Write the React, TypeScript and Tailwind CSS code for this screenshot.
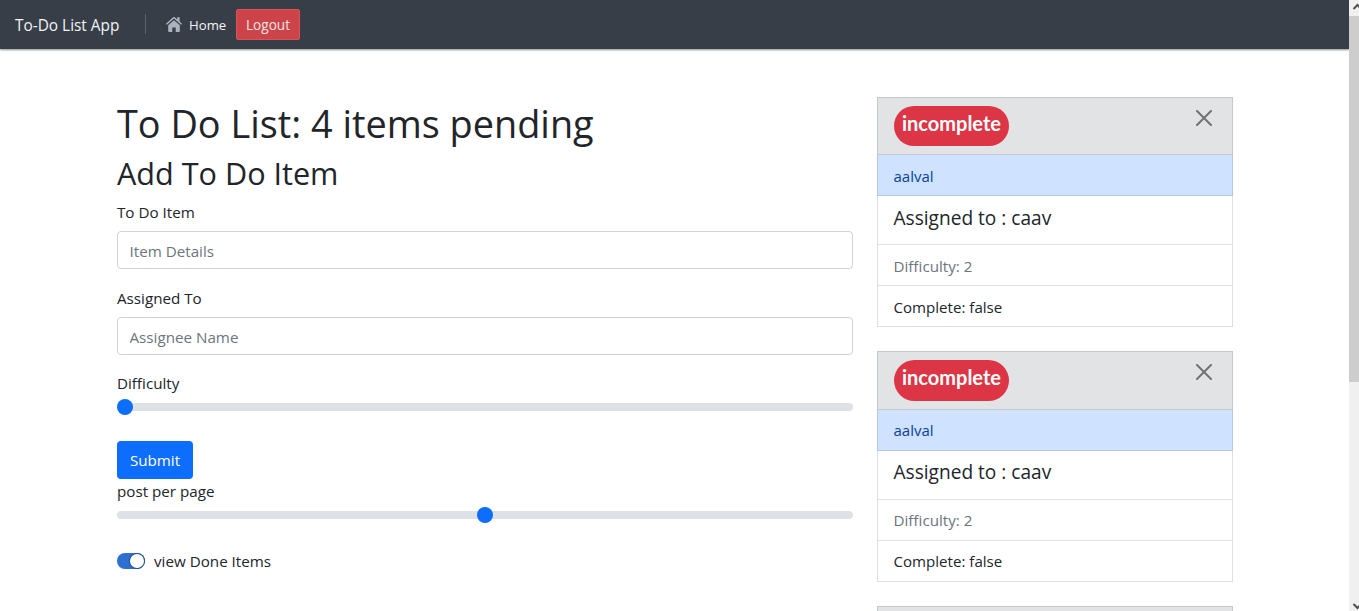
import type { ReactNode } from "react";

function Navbar() {
  return (
    <nav className="flex h-[49px] shrink-0 items-center bg-[#383e48] text-white shadow-[0_1px_2px_rgba(0,0,0,0.45)]">
      <span className="ml-[15px] w-[130px] pt-[2px] text-[15.4px] leading-6 text-[#f1f3f5]">To-Do List App</span>
      <span className="-mt-[2px] h-5 w-px bg-[#5e646d]" />
      <svg className="-mt-[1px] ml-5 h-4 w-4 fill-[#abb3bf]" viewBox="0 0 16 16">
        <path d="M8 4.2 2.2 9.3V15.2c0 .4.3.8.8.8h3.3v-4.6h3.4V16H13c.5 0 .8-.4.8-.8V9.3L8 4.2Z" />
        <path d="M15.7 7.5 13.6 5.6V1.2h-2.3v2.4L8.9 1.3a1.4 1.4 0 0 0-1.8 0L.3 7.5c-.3.3-.3.6-.1.8l.3.3c.2.2.5.2.7 0L8 2.5l6.8 6.1c.2.2.5.2.7 0l.3-.3c.2-.2.2-.5-.1-.8Z" />
      </svg>
      <a className="ml-[7px] w-[47px] pt-[1px] text-[13.2px] leading-5 text-[#f1f3f5]">Home</a>
      <button className="h-[31px] w-16 rounded-[2px] border border-[#d5555a] bg-[#cc4349] pt-[1px] text-[13.6px] leading-5 text-[#f1e3e4]">
        Logout
      </button>
    </nav>
  );
}

function TextField({ label, placeholder }: { label: string; placeholder: string }) {
  return (
    <label className="mb-[17px] block">
      <span className="mb-[7px] block pt-px leading-[23px]">{label}</span>
      <input
        className="block h-[38px] w-full rounded-[4px] border border-[#ced4da] bg-white px-[11.5px] pt-[2px] placeholder:text-[#6c757d]"
        placeholder={placeholder}
      />
    </label>
  );
}

function Range({ start = false }: { start?: boolean }) {
  return (
    <div className="flex h-6 items-center">
      <div className={`flex h-2 w-full items-center rounded-full bg-[#dee2e6] ${start ? "justify-start" : "justify-center"}`}>
        <span className="h-4 w-4 rounded-full bg-[#0d6efd]" />
      </div>
    </div>
  );
}

function Row({ className, children }: { className: string; children: ReactNode }) {
  return <div className={`border-x border-b pr-4 pl-[15.5px] leading-6 ${className}`}>{children}</div>;
}

function TodoCard({ header, badge, pad, padLarge }: { header: string; badge: string; pad: string; padLarge: string }) {
  return (
    <article className="mb-6 shrink-0">
      <header className={`flex justify-between border border-[#c4c8ca] bg-[#e2e3e5] pt-2 pr-5 pl-4 ${header}`}>
        <span
          className={`flex w-[115px] justify-center rounded-full bg-[#dc3545] font-['Lato',sans-serif] text-[20px] leading-8 font-bold text-white ${badge}`}
        >
          incomplete
        </span>
        <svg className="mt-1 h-4 w-4 stroke-[#717273]" viewBox="0 0 16 16" fill="none" strokeWidth="2" strokeLinecap="round">
          <path d="M1 1 15 15M15 1 1 15" />
        </svg>
      </header>
      <Row className={`h-[41px] border-[#b5c6e0] bg-[#cfe2ff] text-[15px] text-[#084298] ${pad}`}>aalval</Row>
      <Row className={`h-[49px] border-[#dfdfdf] text-[19.1px] ${padLarge}`}>Assigned to : caav</Row>
      <Row className={`h-[41px] border-[#dfdfdf] text-[#6c757d] ${pad}`}>Difficulty: 2</Row>
      <Row className={`h-[41px] border-[#dfdfdf] text-[15.1px] ${pad}`}>Complete: false</Row>
    </article>
  );
}

function Scrollbar() {
  return (
    <div className="flex h-full w-[10px] shrink-0 flex-col overflow-hidden bg-[#f0f0f0]">
      <svg className="h-4 w-[10px] shrink-0" viewBox="0 0 10 16" fill="none" stroke="#505050" strokeWidth="2">
        <path d="M4.5 9 8.5 5 12.5 9" />
      </svg>
      <div className="h-[366px] shrink-0 bg-[#cdcdcd]" />
      <svg className="mt-auto h-4 w-[10px] shrink-0" viewBox="0 0 10 16" fill="none" stroke="#505050" strokeWidth="2">
        <path d="M4.5 9 8.5 13 12.5 9" />
      </svg>
    </div>
  );
}

export default function App() {
  return (
    <div className="flex h-[611px] overflow-hidden bg-white font-['Open_Sans',sans-serif] text-[15.2px] text-[#212529]">
      <div className="flex min-w-0 flex-1 flex-col overflow-hidden">
        <Navbar />
        <main className="flex min-h-0 flex-1 gap-6 pt-12 pl-[117px]">
          <section className="w-[736px] shrink-0">
            <h1 className="mb-2 pt-[5px] text-[37.85px] leading-[43px]">To Do List: 4 items pending</h1>
            <h2 className="mb-2 pt-[3px] text-[30.6px] leading-[35px]">Add To Do Item</h2>
            <div className="pt-px">
              <TextField label="To Do Item" placeholder="Item Details" />
              <TextField label="Assigned To" placeholder="Assignee Name" />
            </div>
            <div className="leading-[23px]">Difficulty</div>
            <Range start />
            <button className="mt-[22px] block h-[38px] w-[76px] rounded-[4px] bg-[#0d6efd] pt-px text-white">Submit</button>
            <div className="pt-px leading-[23px]">post per page</div>
            <Range />
            <div className="mt-[22px] flex h-6 items-center">
              <span className="flex h-4 w-7 items-center justify-end rounded-full bg-[#2e6fd0] pr-px">
                <span className="h-[14px] w-[14px] rounded-full bg-white shadow-[0_0_0_1px_#23508f]" />
              </span>
              <span className="ml-[9px] pt-px leading-[23px]">view Done Items</span>
            </div>
          </section>
          <section className="flex w-[356px] shrink-0 flex-col">
            <TodoCard header="h-[58px]" badge="h-10 pt-px" pad="pt-[9px]" padLarge="pt-[10px]" />
            <TodoCard header="h-[59px]" badge="h-[41px] pt-px" pad="pt-[8px]" padLarge="pt-[9px]" />
            <div className="min-h-0 flex-1 border border-b-0 border-[#c4c8ca] bg-[#e2e3e5]" />
          </section>
        </main>
      </div>
      <Scrollbar />
    </div>
  );
}
